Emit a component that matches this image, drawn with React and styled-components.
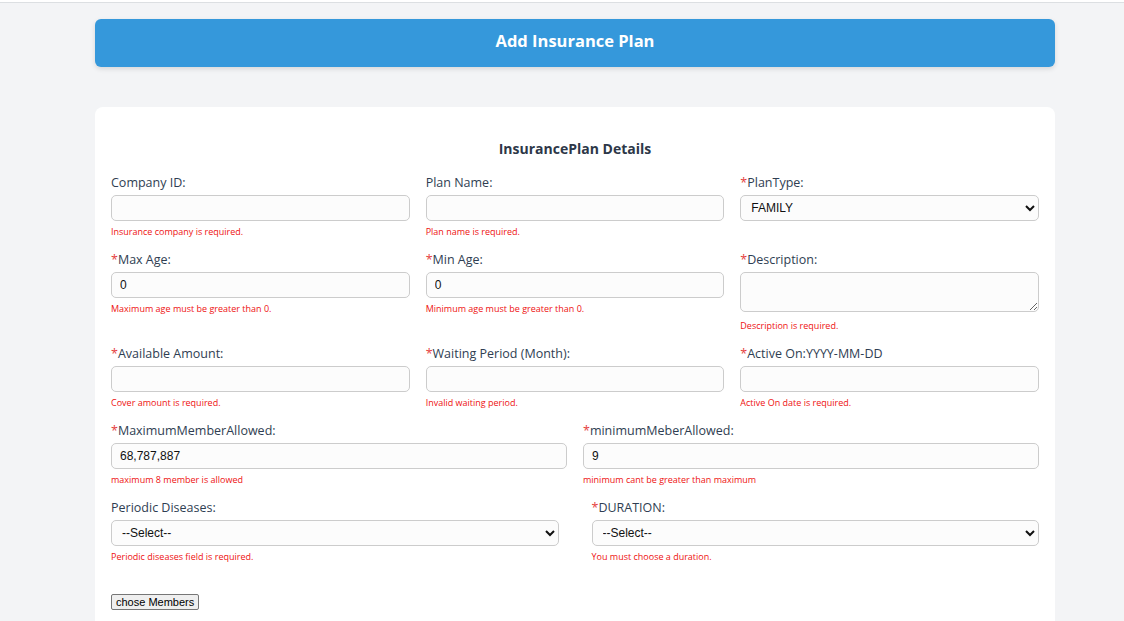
import React from "react";
import styled, { createGlobalStyle } from "styled-components";

const GlobalStyle = createGlobalStyle`
  html, body {
    margin: 0;
    padding: 0;
    background: #ffffff;
    font-family: "Open Sans", "Noto Sans", Arial, sans-serif;
  }
  * { box-sizing: border-box; }
`;

const Page = styled.div`
  margin-top: 2px;
  border-top: 1px solid #dcdfe2;
  background: #f3f4f6;
  min-height: calc(100vh - 3px);
  padding: 16px 0 0;
`;

const Wrapper = styled.div`
  width: 960px;
  margin-left: 95px;
`;

const Header = styled.div`
  height: 48px;
  background: #3598db;
  border-radius: 6px;
  box-shadow: 0 2px 5px rgba(0, 0, 0, 0.12);
  display: flex;
  align-items: center;
  justify-content: center;
  padding-bottom: 6px;
  color: #fff;
  font-size: 16.5px;
  font-weight: 700;
`;

const Card = styled.div`
  margin-top: 40px;
  background: #fff;
  border-radius: 8px;
  padding: 32px 16px 40px;
`;

const Title = styled.h3`
  margin: 0 0 17px;
  text-align: center;
  font-size: 14px;
  font-weight: 700;
  color: #2d3748;
`;

const Row = styled.div`
  display: grid;
  grid-template-columns: ${(p) => p.cols || "1fr 1fr 1fr"};
  column-gap: ${(p) => p.gap || 16}px;
  margin-bottom: 14px;
  align-items: start;
`;

const Field = styled.div`
  display: flex;
  flex-direction: column;
`;

const Label = styled.label`
  font-size: 12.5px;
  font-weight: 500;
  line-height: 16px;
  color: #2f3e52;
  margin-bottom: 4px;
`;

const Star = styled.span`
  color: #e53e3e;
`;

const Input = styled.input`
  height: 26px;
  border: 1px solid #cccccc;
  border-radius: 5px;
  background: #fcfcfc;
  padding: 0 8px;
  font-family: Arial, "Liberation Sans", sans-serif;
  font-size: 12px;
  color: #111;
  outline: none;
`;

const TextArea = styled.textarea`
  height: 40px;
  border: 1px solid #cccccc;
  border-radius: 5px;
  background: #fcfcfc;
  padding: 4px 8px;
  font-family: Arial, "Liberation Sans", sans-serif;
  font-size: 12px;
  margin-bottom: 3px;
`;

const Select = styled.select`
  height: 26px;
  border: 1px solid #cccccc;
  border-radius: 5px;
  background: #fcfcfc;
  padding: 0 6px;
  font-family: Arial, "Liberation Sans", sans-serif;
  font-size: 12px;
  color: #111;
`;

const Error = styled.div`
  margin-top: 5px;
  font-size: 9px;
  line-height: 12px;
  color: #ee1111;
`;

const ChoseButton = styled.button`
  margin-top: 17px;
  font-family: Arial, "Liberation Sans", sans-serif;
  font-size: 11px;
  padding: 1px 4px;
  border: 1px solid #767676;
  border-radius: 2px;
  background: #efefef;
  color: #000;
`;

function FormField({ label, required, children, error }) {
  return (
    <Field>
      <Label>
        {required && <Star>*</Star>}
        {label}
      </Label>
      {children}
      {error && <Error>{error}</Error>}
    </Field>
  );
}

export default function App() {
  return (
    <>
      <GlobalStyle />
      <Page>
        <Wrapper>
          <Header>Add Insurance Plan</Header>
          <Card>
            <Title>InsurancePlan Details</Title>
            <Row>
              <FormField label="Company ID:" error="Insurance company is required.">
                <Input type="text" />
              </FormField>
              <FormField label="Plan Name:" error="Plan name is required.">
                <Input type="text" />
              </FormField>
              <FormField label="PlanType:" required>
                <Select defaultValue="FAMILY">
                  <option>FAMILY</option>
                  <option>INDIVIDUAL</option>
                </Select>
              </FormField>
            </Row>
            <Row>
              <FormField label="Max Age:" required error="Maximum age must be greater than 0.">
                <Input defaultValue="0" />
              </FormField>
              <FormField label="Min Age:" required error="Minimum age must be greater than 0.">
                <Input defaultValue="0" />
              </FormField>
              <FormField label="Description:" required error="Description is required.">
                <TextArea />
              </FormField>
            </Row>
            <Row>
              <FormField label="Available Amount:" required error="Cover amount is required.">
                <Input />
              </FormField>
              <FormField label="Waiting Period (Month):" required error="Invalid waiting period.">
                <Input />
              </FormField>
              <FormField label="Active On:YYYY-MM-DD" required error="Active On date is required.">
                <Input />
              </FormField>
            </Row>
            <Row cols="1fr 1fr">
              <FormField label="MaximumMemberAllowed:" required error="maximum 8 member is allowed">
                <Input defaultValue="68,787,887" />
              </FormField>
              <FormField label="minimumMeberAllowed:" required error="minimum cant be greater than maximum">
                <Input defaultValue="9" />
              </FormField>
            </Row>
            <Row cols="1fr 1fr" gap={33}>
              <FormField label="Periodic Diseases:" error="Periodic diseases field is required.">
                <Select defaultValue="">
                  <option value="">--Select--</option>
                </Select>
              </FormField>
              <FormField label="DURATION:" required error="You must choose a duration.">
                <Select defaultValue="">
                  <option value="">--Select--</option>
                </Select>
              </FormField>
            </Row>
            <ChoseButton>chose Members</ChoseButton>
          </Card>
        </Wrapper>
      </Page>
    </>
  );
}
